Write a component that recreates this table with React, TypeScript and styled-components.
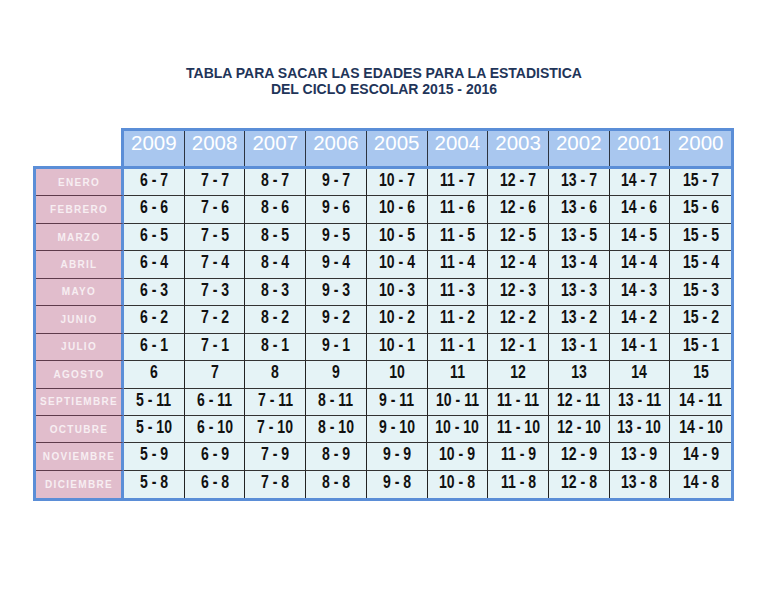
import React from "react";
import styled, { createGlobalStyle } from "styled-components";

const Global = createGlobalStyle`
  html, body { margin: 0; padding: 0; background: #ffffff; }
  body { width: 768px; height: 594px; overflow: hidden; font-family: "Liberation Sans", Arial, sans-serif; }
`;

const BLUE = "#5b8ed7";

const Page = styled.div`
  padding: 65px 0 0 33px;
  width: 701px;
`;

const Title = styled.h1`
  margin: 0 0 31px -33px;
  width: 768px;
  text-align: center;
  font-family: "Liberation Sans", Arial, sans-serif;
  font-weight: bold;
  font-size: 14px;
  line-height: 16px;
  color: #1f3559;
`;

const Header = styled.div`
  margin-left: 88px;
  border: 3px solid ${BLUE};
  border-bottom: none;
  background: #a9c7ef;
  display: grid;
  grid-template-columns: repeat(10, 1fr);
  height: 35px;
`;

const YearCell = styled.div<{ $last?: boolean }>`
  border-right: ${(p) => (p.$last ? "none" : "1px solid #2c3440")};
  color: #ffffff;
  font-family: "Liberation Sans", Arial, sans-serif;
  font-size: 20.5px;
  line-height: 20px;
  padding-top: 2px;
  text-align: center;
`;

const Body = styled.div`
  border: 3px solid ${BLUE};
  display: grid;
  grid-template-columns: 88px repeat(10, 1fr);
  grid-auto-rows: 27.45px;
`;

const MonthCell = styled.div<{ $last?: boolean }>`
  background: #e1bdcc;
  border-right: 3px solid ${BLUE};
  border-bottom: ${(p) => (p.$last ? "none" : "1px solid #5e3b4b")};
  color: #f7eef2;
  font-family: "Liberation Sans", Arial, sans-serif;
  font-weight: bold;
  font-size: 10px;
  letter-spacing: 1.3px;
  display: flex;
  align-items: center;
  justify-content: center;
  padding-left: 1px;
`;

const DataCell = styled.div<{ $last?: boolean; $lastCol?: boolean }>`
  background: #e5f3f6;
  border-right: ${(p) => (p.$lastCol ? "none" : "1px solid #222")};
  border-bottom: ${(p) => (p.$last ? "none" : "1px solid #333")};
  padding-top: 2px;
  text-align: center;
  white-space: nowrap;
`;

const Narrow = styled.span`
  display: inline-block;
  color: #111;
  font-family: "Liberation Sans", Arial, sans-serif;
  font-weight: bold;
  font-size: 18px;
  line-height: 18px;
  transform: scaleX(0.78);
  transform-origin: center;
`;

const years = [2009, 2008, 2007, 2006, 2005, 2004, 2003, 2002, 2001, 2000];
const months = [
  "ENERO", "FEBRERO", "MARZO", "ABRIL", "MAYO", "JUNIO",
  "JULIO", "AGOSTO", "SEPTIEMBRE", "OCTUBRE", "NOVIEMBRE", "DICIEMBRE",
];

function cellText(col: number, row: number): string {
  const base = 6 + col;
  if (row <= 6) return `${base} - ${7 - row}`;
  if (row === 7) return `${base}`;
  return `${base - 1} - ${11 - (row - 8)}`;
}

export default function App() {
  return (
    <>
      <Global />
      <Page>
        <Title>
          TABLA PARA SACAR LAS EDADES PARA LA ESTADISTICA
          <br />
          DEL CICLO ESCOLAR 2015 - 2016
        </Title>
        <Header>
          {years.map((y, i) => (
            <YearCell key={y} $last={i === years.length - 1}>
              {y}
            </YearCell>
          ))}
        </Header>
        <Body>
          {months.map((m, r) => (
            <React.Fragment key={m}>
              <MonthCell $last={r === months.length - 1}>{m}</MonthCell>
              {years.map((y, c) => (
                <DataCell
                  key={y}
                  $last={r === months.length - 1}
                  $lastCol={c === years.length - 1}
                >
                  <Narrow>{cellText(c, r)}</Narrow>
                </DataCell>
              ))}
            </React.Fragment>
          ))}
        </Body>
      </Page>
    </>
  );
}
